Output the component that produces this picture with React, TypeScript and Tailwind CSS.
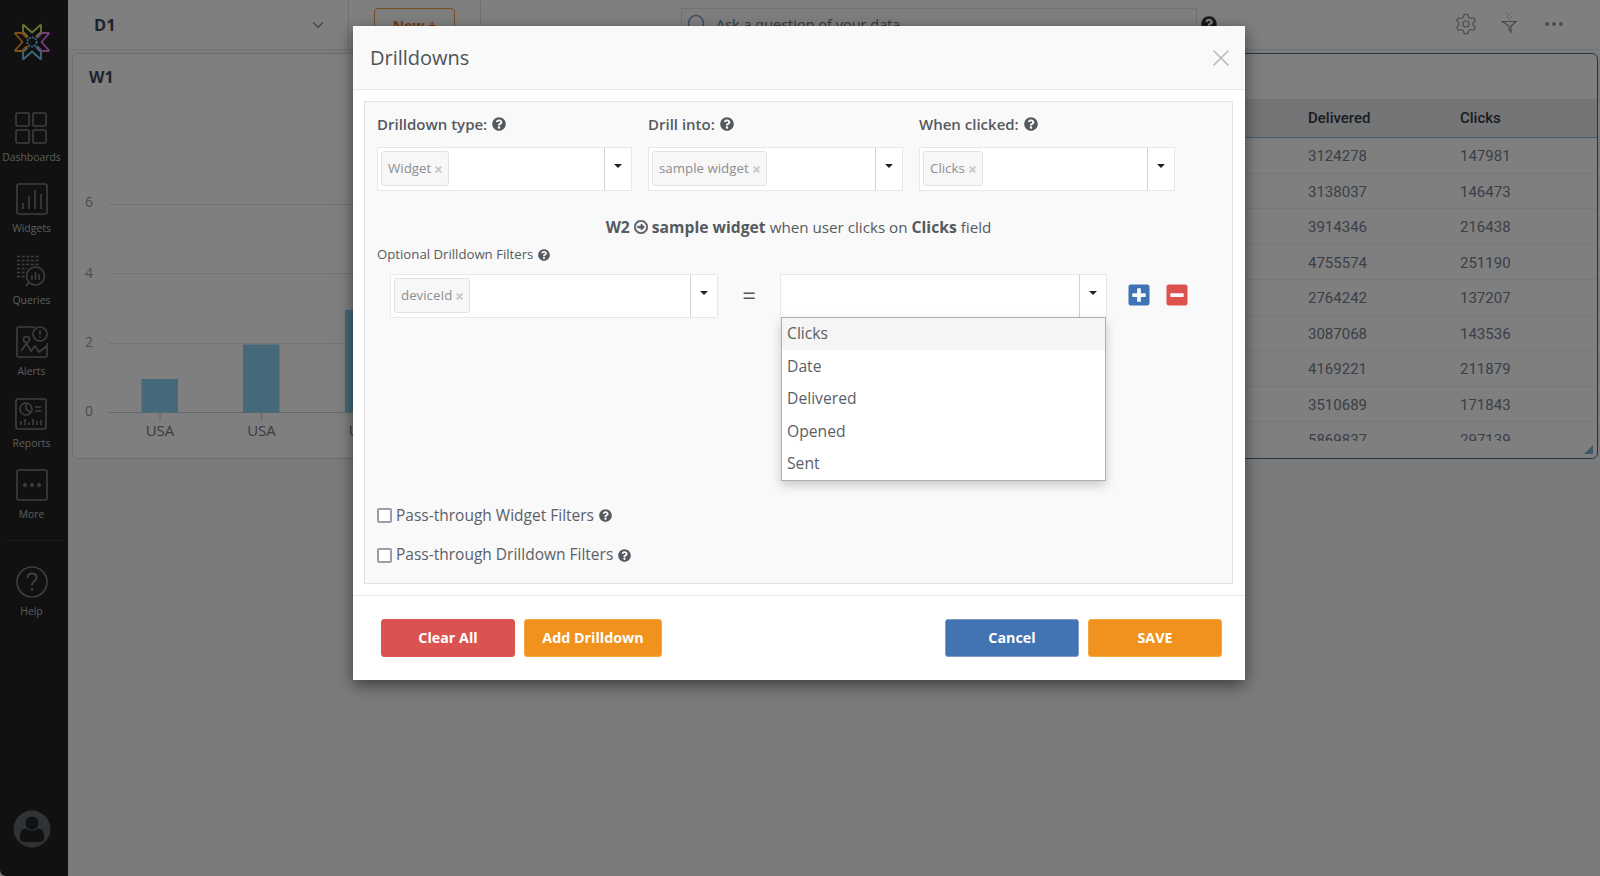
import React from "react";
import { FaQuestionCircle, FaRegArrowAltCircleRight, FaPlusSquare, FaMinusSquare, FaTimes } from "react-icons/fa";
import { Settings, MoreHorizontal, ChevronDown, X } from "lucide-react";

const ICON = "#7a7e82";

function Logo() {
  return (
    <svg width="38" height="38" viewBox="0 0 38 38" fill="none" strokeWidth="1.8" strokeLinejoin="miter">
      <path d="M10 1.5 L10 9 L15 14 M28 1.5 L28 9 L23 14 M10 1.5 L19 9.5 L28 1.5" stroke="#d8ea5e" />
      <path d="M36.5 10 L29 10 L24 15 M36.5 28 L29 28 L24 23 M36.5 10 L28.5 19 L36.5 28" stroke="#e47cf5" />
      <path d="M10 36.5 L10 29 L15 24 M28 36.5 L28 29 L23 24 M10 36.5 L19 28.5 L28 36.5" stroke="#79d6fa" />
      <path d="M1.5 10 L9 10 L14 15 M1.5 28 L9 28 L14 23 M1.5 10 L9.5 19 L1.5 28" stroke="#ff9a2c" />
      <circle cx="19" cy="19" r="4.6" stroke="#79d6fa" strokeDasharray="2 1" />
    </svg>
  );
}

function DashIcon() {
  return (
    <svg width="32" height="32" viewBox="0 0 32 32" fill="none" stroke={ICON} strokeWidth="1.6">
      <rect x="1" y="1" width="13" height="13" rx="1.5" />
      <rect x="18" y="1" width="13" height="13" rx="1.5" />
      <rect x="1" y="18" width="13" height="13" rx="1.5" />
      <rect x="18" y="18" width="13" height="13" rx="1.5" />
    </svg>
  );
}
function WidgetIcon() {
  return (
    <svg width="32" height="32" viewBox="0 0 32 32" fill="none" stroke={ICON} strokeWidth="1.6">
      <rect x="1" y="1" width="30" height="30" rx="2" />
      <path d="M7 26 V20 M13 26 V13 M19 26 V7 M25 26 V11" />
    </svg>
  );
}
function QueryIcon() {
  return (
    <svg width="32" height="32" viewBox="0 0 32 32" fill="none" stroke={ICON} strokeWidth="1.5">
      <path d="M2 1.5 H24 M2 5.5 H24 M2 9.5 H24 M2 13.5 H12 M2 17.5 H10 M2 21.5 H10" strokeDasharray="3 1.6" />
      <circle cx="20.5" cy="21" r="9" />
      <path d="M14 27.5 L11 31 M17 25 V20 M20.5 25 V17 M24 25 V19" />
    </svg>
  );
}
function AlertIcon() {
  return (
    <svg width="32" height="32" viewBox="0 0 32 32" fill="none" stroke={ICON} strokeWidth="1.6">
      <path d="M19 1 H3 Q1 1 1 3 V29 Q1 31 3 31 H29 Q31 31 31 29 V17" />
      <circle cx="24" cy="8" r="7" />
      <path d="M24 4 V9 M24 10.5 V12" />
      <path d="M5 25 L10.5 17.5 L15 25 L19 20 L23 26 L31 20" />
      <circle cx="10.5" cy="13.5" r="3" />
    </svg>
  );
}
function ReportIcon() {
  return (
    <svg width="32" height="32" viewBox="0 0 32 32" fill="none" stroke={ICON} strokeWidth="1.6">
      <rect x="1" y="1" width="30" height="30" rx="2" />
      <circle cx="11" cy="11" r="6" />
      <path d="M11 6 V11 L15 14 M20 9 H26 M20 13 H26" />
      <path d="M6 27 V23 M10 27 V21 M14 27 V24 M18 27 V21 M22 27 V23 M26 27 V22" />
    </svg>
  );
}
function MoreIcon() {
  return (
    <svg width="32" height="32" viewBox="0 0 32 32" fill="none" stroke={ICON} strokeWidth="1.6">
      <rect x="1" y="1" width="30" height="30" rx="2" />
      <circle cx="9" cy="16" r="1.2" fill={ICON} />
      <circle cx="16" cy="16" r="1.2" fill={ICON} />
      <circle cx="23" cy="16" r="1.2" fill={ICON} />
    </svg>
  );
}
function HelpIcon() {
  return (
    <svg width="32" height="32" viewBox="0 0 32 32" fill="none" stroke={ICON} strokeWidth="1.6">
      <circle cx="16" cy="16" r="15" />
      <path d="M11.5 12 Q12 7.5 16 7.5 Q20.5 7.5 20.5 11.5 Q20.5 14 18 15.5 Q16 16.8 16 19.5" strokeWidth="2" />
      <circle cx="16" cy="23.5" r="1.3" fill={ICON} stroke="none" />
    </svg>
  );
}
function Avatar() {
  return (
    <svg width="38" height="38" viewBox="0 0 38 38">
      <circle cx="19" cy="19" r="18.5" fill="#60666b" />
      <circle cx="19" cy="13" r="6.6" fill="#222222" />
      <path d="M7 26 Q7 19 13 18.5 Q19 23 25 18.5 Q31 19 31 26 V28 Q31 32 27 32 H11 Q7 32 7 28 Z" fill="#222222" />
    </svg>
  );
}
function FunnelIcon() {
  return (
    <svg width="16" height="22" viewBox="0 0 16 22" fill="none" stroke="#8a8f94" strokeWidth="1.2">
      <path d="M1 9.5 H15 L10 14 V20 L8 17.5 V14 Z" />
      <path d="M5 1 H6 M7 3 H8 M9 1 H10 M6 5 H7 M10 5 H11 M8 7 H9" strokeWidth="1.2" />
    </svg>
  );
}
function SearchGlass() {
  return (
    <svg width="22" height="24" viewBox="0 0 22 24" fill="none" stroke="#7aa0cc" strokeWidth="1.5">
      <circle cx="9" cy="10" r="7.5" />
      <path d="M15 15 L20 21" />
    </svg>
  );
}

function NavItem({ icon, label }: { icon: React.ReactNode; label: string }) {
  return (
    <div className="flex h-[71.4px] flex-col items-center">
      <div className="h-[32px]">{icon}</div>
      <div className="mt-[7px] text-[10.4px] leading-[12px] text-[#b4babf]">{label}</div>
    </div>
  );
}

function Caret() {
  return <div className="mt-[-6px] h-0 w-0 border-x-[4px] border-t-[4px] border-x-transparent border-t-[#222222]" />;
}

function Select({ tag, w }: { tag?: string; w: string }) {
  return (
    <div className={`flex h-[44px] border border-[#e6e9ec] bg-white ${w}`}>
      <div className="flex min-w-0 flex-1 items-center pl-[3px]">
        {tag && (
          <div className="mb-[1px] flex h-[35px] items-center rounded-[3px] border border-[#e2e2e2] bg-[#f7f7f7] pl-[6px] pr-[5px] text-[13.3px] text-[#8e8e8e]">
            {tag}
            <FaTimes className="ml-[3px] mt-[1px] text-[#c9c9c9]" size={9} stroke="currentColor" strokeWidth={30} />
          </div>
        )}
      </div>
      <div className="flex w-[27px] shrink-0 items-center justify-center border-l border-[#cfd2d4]">
        <Caret />
      </div>
    </div>
  );
}

function Label({ text }: { text: string }) {
  return (
    <div className="flex h-[24px] items-center text-[15px] font-semibold text-[#555a60]">
      {text}
      <FaQuestionCircle className="ml-[5px] text-[#555a60]" size={14} />
    </div>
  );
}

function Check({ text, cls }: { text: string; cls: string }) {
  return (
    <div className={`flex h-[15px] items-center text-[15.5px] text-[#5b6068] ${cls}`}>
      <div className="h-[15px] w-[15px] shrink-0 rounded-[2px] border-2 border-[#9d9ca8] bg-white" />
      <span className="ml-[4px]">{text}</span>
      <FaQuestionCircle className="ml-[5px] text-[#555a60]" size={13} />
    </div>
  );
}

function Btn({ text, cls }: { text: string; cls: string }) {
  return (
    <div className={`flex h-[38.5px] items-center justify-center rounded-[3px] border text-[14.3px] font-bold text-white ${cls}`}>
      {text}
    </div>
  );
}

const rows = [
  ["3124278", "147981"],
  ["3138037", "146473"],
  ["3914346", "216438"],
  ["4755574", "251190"],
  ["2764242", "137207"],
  ["3087068", "143536"],
  ["4169221", "211879"],
  ["3510689", "171843"],
  ["5869837", "297139"],
];

function Chart() {
  const grid = [
    [6, 204.5, 2.5],
    [4, 273.5, 4],
    [2, 343.5, 3],
    [0, 412.5, 3],
  ];
  return (
    <svg width="738" height="350" viewBox="73 100 738 350" className="block">
      {grid.map(([v, y, d]) => (
        <g key={v}>
          <line x1="109" x2="811" y1={y} y2={y} stroke={v === 0 ? "#c4ccd4" : "#e6e6e6"} />
          <text x="89" y={y + d} textAnchor="middle" fontSize="14" fill="#94999f">{v}</text>
        </g>
      ))}
      <rect x="141.5" y="379" width="36.5" height="33.5" fill="#8cd3f2" />
      <rect x="243" y="344.5" width="36.5" height="68" fill="#8cd3f2" />
      <rect x="345" y="310" width="36.5" height="102.5" fill="#8cd3f2" />
      {[160, 261.5, 363].map((x) => (
        <g key={x}>
          <line x1={x} x2={x} y1="413" y2="421" stroke="#c4ccd4" />
          <text x={x} y="435.5" textAnchor="middle" fontSize="15" fill="#74787e">USA</text>
        </g>
      ))}
    </svg>
  );
}

export default function App() {
  return (
    <div className="relative flex h-[876px] w-[1600px] overflow-hidden bg-[#f4f6f8] font-['Open_Sans',sans-serif]">
      <aside className="flex w-[68px] shrink-0 flex-col items-center rounded-bl-[6px] bg-[#222222] pr-[5px]">
        <div className="flex h-[112px] w-full justify-center pt-[23px]">
          <Logo />
        </div>
        <NavItem icon={<DashIcon />} label="Dashboards" />
        <NavItem icon={<WidgetIcon />} label="Widgets" />
        <NavItem icon={<QueryIcon />} label="Queries" />
        <NavItem icon={<AlertIcon />} label="Alerts" />
        <NavItem icon={<ReportIcon />} label="Reports" />
        <NavItem icon={<MoreIcon />} label="More" />
        <div className="mb-[25px] ml-[5px] h-px w-[60px] bg-[#333638]" />
        <NavItem icon={<HelpIcon />} label="Help" />
        <div className="mt-auto pb-[28px]">
          <Avatar />
        </div>
      </aside>

      <main className="flex min-w-0 flex-1 flex-col">
        <header className="flex h-[50px] shrink-0 items-start border-b border-[#dfe2e5] bg-white">
          <div className="flex h-full w-[280px] items-center justify-between pl-[26px] pr-[21px]">
            <span className="pt-[1px] text-[16.5px] font-bold text-[#38465e]">D1</span>
            <ChevronDown size={18} strokeWidth={1.5} className="text-[#80858b]" />
          </div>
          <div className="h-full w-[133px] border-x border-[#e2e4e7] pl-[25px] pt-[8px]">
            <div className="flex h-[34px] w-[81px] items-center justify-center rounded-[4px] border border-[#f09a45] text-[14px] font-bold text-[#f0781e]">
              New +
            </div>
          </div>
          <div className="ml-[200px] mt-[8px] flex h-[34px] w-[516px] items-center border border-[#e0e3e6] pl-[5px]">
            <SearchGlass />
            <span className="ml-[7px] text-[14.5px] text-[#6c7278]">Ask a question of your data</span>
          </div>
          <FaQuestionCircle className="ml-[4px] mt-[16px] text-[#333333]" size={16} />
          <div className="ml-[236.5px] mt-[11.5px] flex items-center">
            <Settings size={24} strokeWidth={1.2} className="text-[#94999f]" />
            <div className="ml-[23px] mt-[-2px]"><FunnelIcon /></div>
            <MoreHorizontal size={24} strokeWidth={2} className="ml-[25px] text-[#94999f]" />
          </div>
        </header>

        <div className="flex gap-[4px] pl-[4px] pr-[2px] pt-[3px]">
          <section className="h-[406px] w-[733px] shrink-0 overflow-hidden rounded-[6px] border border-[#d6d9dc] bg-white">
            <div className="h-[46px] pl-[16px] pt-[11px] text-[16px] font-bold leading-[24px] text-[#38465e]">W1</div>
            <Chart />
          </section>
          <section className="relative h-[406px] min-w-0 flex-1 rounded-[6px] border border-[#54657e] bg-white font-['Roboto',sans-serif]">
            <div className="h-[45px]" />
            <div className="flex h-[39px] items-center border-b border-[#7ec5d8] bg-[#e8eaec] text-[15px] font-medium text-[#343a40]">
              <div className="w-[498px] shrink-0" />
              <div className="w-[152px] shrink-0">Delivered</div>
              <div>Clicks</div>
            </div>
            <div className="h-[303px] overflow-hidden">
              {rows.map(([a, b]) => (
                <div key={a} className="flex h-[35.5px] items-center border-b border-[#eceef0] pt-[2px] text-[15px] text-[#747e90]">
                  <div className="w-[498px] shrink-0" />
                  <div className="w-[152px] shrink-0">{a}</div>
                  <div>{b}</div>
                </div>
              ))}
            </div>
            <svg width="9" height="9" viewBox="0 0 9 9" className="absolute bottom-[4px] right-[4px]">
              <path d="M9 0 V9 H0 Z" fill="#7fb0cf" />
            </svg>
          </section>
        </div>
      </main>

      <div className="absolute inset-0 bg-black/50" />

      <div className="absolute left-[353px] top-[26px] flex h-[654px] w-[892px] flex-col bg-white shadow-[0_5px_15px_rgba(0,0,0,0.5)]">
        <div className="flex h-[64px] shrink-0 items-center justify-between border-b border-[#e8e8e8] bg-[#f9f9f9] pl-[17px] pr-[10px]">
          <span className="text-[20px] text-[#4c5258]">Drilldowns</span>
          <X size={28} strokeWidth={1.2} className="text-[#b5b5b5]" />
        </div>

        <div className="flex-1 px-[11px] pt-[11px]">
          <div className="relative h-[483px] w-[869px] border border-[#e3e3e3] bg-[#f9f9f9] pl-[12px] pt-[10px]">
            <div className="flex gap-[16px]">
              <div>
                <Label text="Drilldown type:" />
                <div className="mt-[11px]"><Select tag="Widget" w="w-[255px]" /></div>
              </div>
              <div>
                <Label text="Drill into:" />
                <div className="mt-[11px]"><Select tag="sample widget" w="w-[255px]" /></div>
              </div>
              <div>
                <Label text="When clicked:" />
                <div className="mt-[11px]"><Select tag="Clicks" w="w-[256px]" /></div>
              </div>
            </div>

            <div className="mt-[24px] flex h-[24px] items-baseline justify-center pr-[12px] text-[15.2px] leading-[25px] text-[#555a60]">
              <b className="text-[15.7px] font-bold">W2</b>
              <FaRegArrowAltCircleRight className="mx-[4px] self-center text-[#555a60]" size={14} stroke="currentColor" strokeWidth={24} />
              <b className="text-[15.7px] font-bold">sample widget</b>
              <span className="ml-[4px]">when user clicks on</span>
              <b className="ml-[4px] text-[15.7px] font-bold">Clicks</b>
              <span className="ml-[4px]">field</span>
            </div>

            <div className="mt-[7px] flex h-[18px] items-center text-[13.2px] text-[#555a60]">
              Optional Drilldown Filters
              <FaQuestionCircle className="ml-[5px]" size={12} />
            </div>

            <div className="ml-[13px] mt-[10px] flex items-start">
              <Select tag="deviceId" w="w-[328px]" />
              <div className="flex h-[42px] w-[62px] items-center justify-center text-[24px] text-[#555a60]">=</div>
              <div className="relative">
                <Select w="w-[327px]" />
                <div className="absolute left-[1px] top-[43px] z-10 w-[325px] border border-[#a8b0b8] bg-white text-[15.7px] text-[#5a5f64] shadow-[0_4px_10px_rgba(0,0,0,0.2)]">
                  {["Clicks", "Date", "Delivered", "Opened", "Sent"].map((o, i) => (
                    <div key={o} className={`flex h-[32.4px] items-center pl-[5px] ${i === 0 ? "bg-[#f5f5f5]" : ""}`}>{o}</div>
                  ))}
                </div>
              </div>
              <FaPlusSquare className="ml-[19.5px] mt-[8.5px] text-[#3f73b6]" size={24} />
              <FaMinusSquare className="ml-[14.5px] mt-[8.5px] text-[#dc504e]" size={24} />
            </div>

            <Check text="Pass-through Widget Filters" cls="mt-[190px]" />
            <Check text="Pass-through Drilldown Filters" cls="mt-[24.5px]" />
          </div>
        </div>

        <div className="flex h-[85px] shrink-0 items-start justify-between border-t border-[#e8e8e8] pl-[28px] pr-[23px] pt-[22.5px]">
          <div className="flex gap-[9px]">
            <Btn text="Clear All" cls="w-[134px] border-[#d9534f] bg-[#da5350]" />
            <Btn text="Add Drilldown" cls="w-[138px] border-[#f5a63f] bg-[#f1921f]" />
          </div>
          <div className="flex gap-[9px]">
            <Btn text="Cancel" cls="w-[134px] border-[#7e9cc5] bg-[#4273b2]" />
            <Btn text="SAVE" cls="w-[134px] border-[#f5a63f] bg-[#f1921f]" />
          </div>
        </div>
      </div>
    </div>
  );
}
